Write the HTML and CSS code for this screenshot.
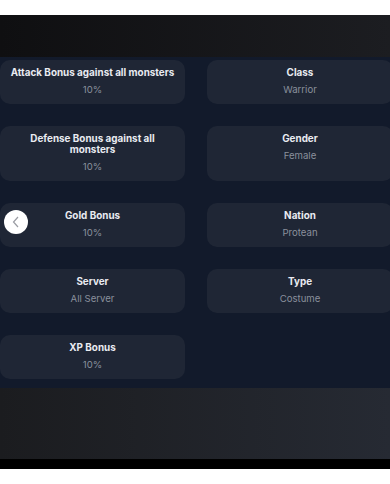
FILE: index.html
```html
<html lang="en">
<head>
    <meta charset="utf-8">
    <link rel="stylesheet" href="styles.css">
</head>
<body>
<div class="top-gap"></div>
<div class="header-band"></div>

<div class="details">
    <div class="grid">
        <div class="card">
            <div class="label">Attack Bonus against all monsters</div>
            <div class="value">10%</div>
        </div>
        <div class="card">
            <div class="label">Class</div>
            <div class="value">Warrior</div>
        </div>
        <div class="card">
            <div class="label">Defense Bonus against all monsters</div>
            <div class="value">10%</div>
        </div>
        <div class="card">
            <div class="label">Gender</div>
            <div class="value">Female</div>
        </div>
        <div class="card">
            <div class="label">Gold Bonus</div>
            <div class="value">10%</div>
        </div>
        <div class="card">
            <div class="label">Nation</div>
            <div class="value">Protean</div>
        </div>
        <div class="card">
            <div class="label">Server</div>
            <div class="value">All Server</div>
        </div>
        <div class="card">
            <div class="label">Type</div>
            <div class="value">Costume</div>
        </div>
        <div class="card">
            <div class="label">XP Bonus</div>
            <div class="value">10%</div>
        </div>
    </div>

    <button class="prev" title="previous">
        <svg width="10" height="12" viewBox="0 0 10 12">
            <path d="M7 1 L2.5 6 L7 11" fill="none" stroke="#9a9ca3" stroke-width="1.2"/>
        </svg>
    </button>
</div>

<div class="footer-band"></div>
<div class="bottom-bar"></div>
</body>
</html>
```

FILE: styles.css
```css
body {
    margin: 0;
    background: #fff;
    overflow: hidden;
    font-family: "Inter", "Noto Sans", sans-serif;
}

.top-gap {
    height: 15px;
}

.header-band {
    height: 42px;
    background: linear-gradient(90deg, #0f0f11, #1c1d21);
}

.details {
    position: relative;
    background: #121a2b;
    padding: 3px 0 9px;
}

.grid {
    width: 393px;
    display: grid;
    grid-template-columns: 185px 186px;
    column-gap: 22px;
    row-gap: 22px;
}

.card {
    background: #1f2635;
    border-radius: 10px;
    padding: 7px 10px 9px;
    text-align: center;
}

.label {
    color: #e9ebf1;
    font-size: 9.9px;
    font-weight: 700;
    line-height: 11px;
}

.value {
    margin-top: 6px;
    color: #8a909c;
    font-size: 9.6px;
    line-height: 11px;
}

.prev {
    position: absolute;
    left: 4px;
    top: 153px;
    width: 24px;
    height: 24px;
    padding: 0;
    border: none;
    border-radius: 50%;
    background: #fff;
    display: flex;
    align-items: center;
    justify-content: center;
}

.footer-band {
    height: 71px;
    background: linear-gradient(90deg, #1b1c1f, #262a33);
}

.bottom-bar {
    height: 10px;
    background: #000;
}
```
